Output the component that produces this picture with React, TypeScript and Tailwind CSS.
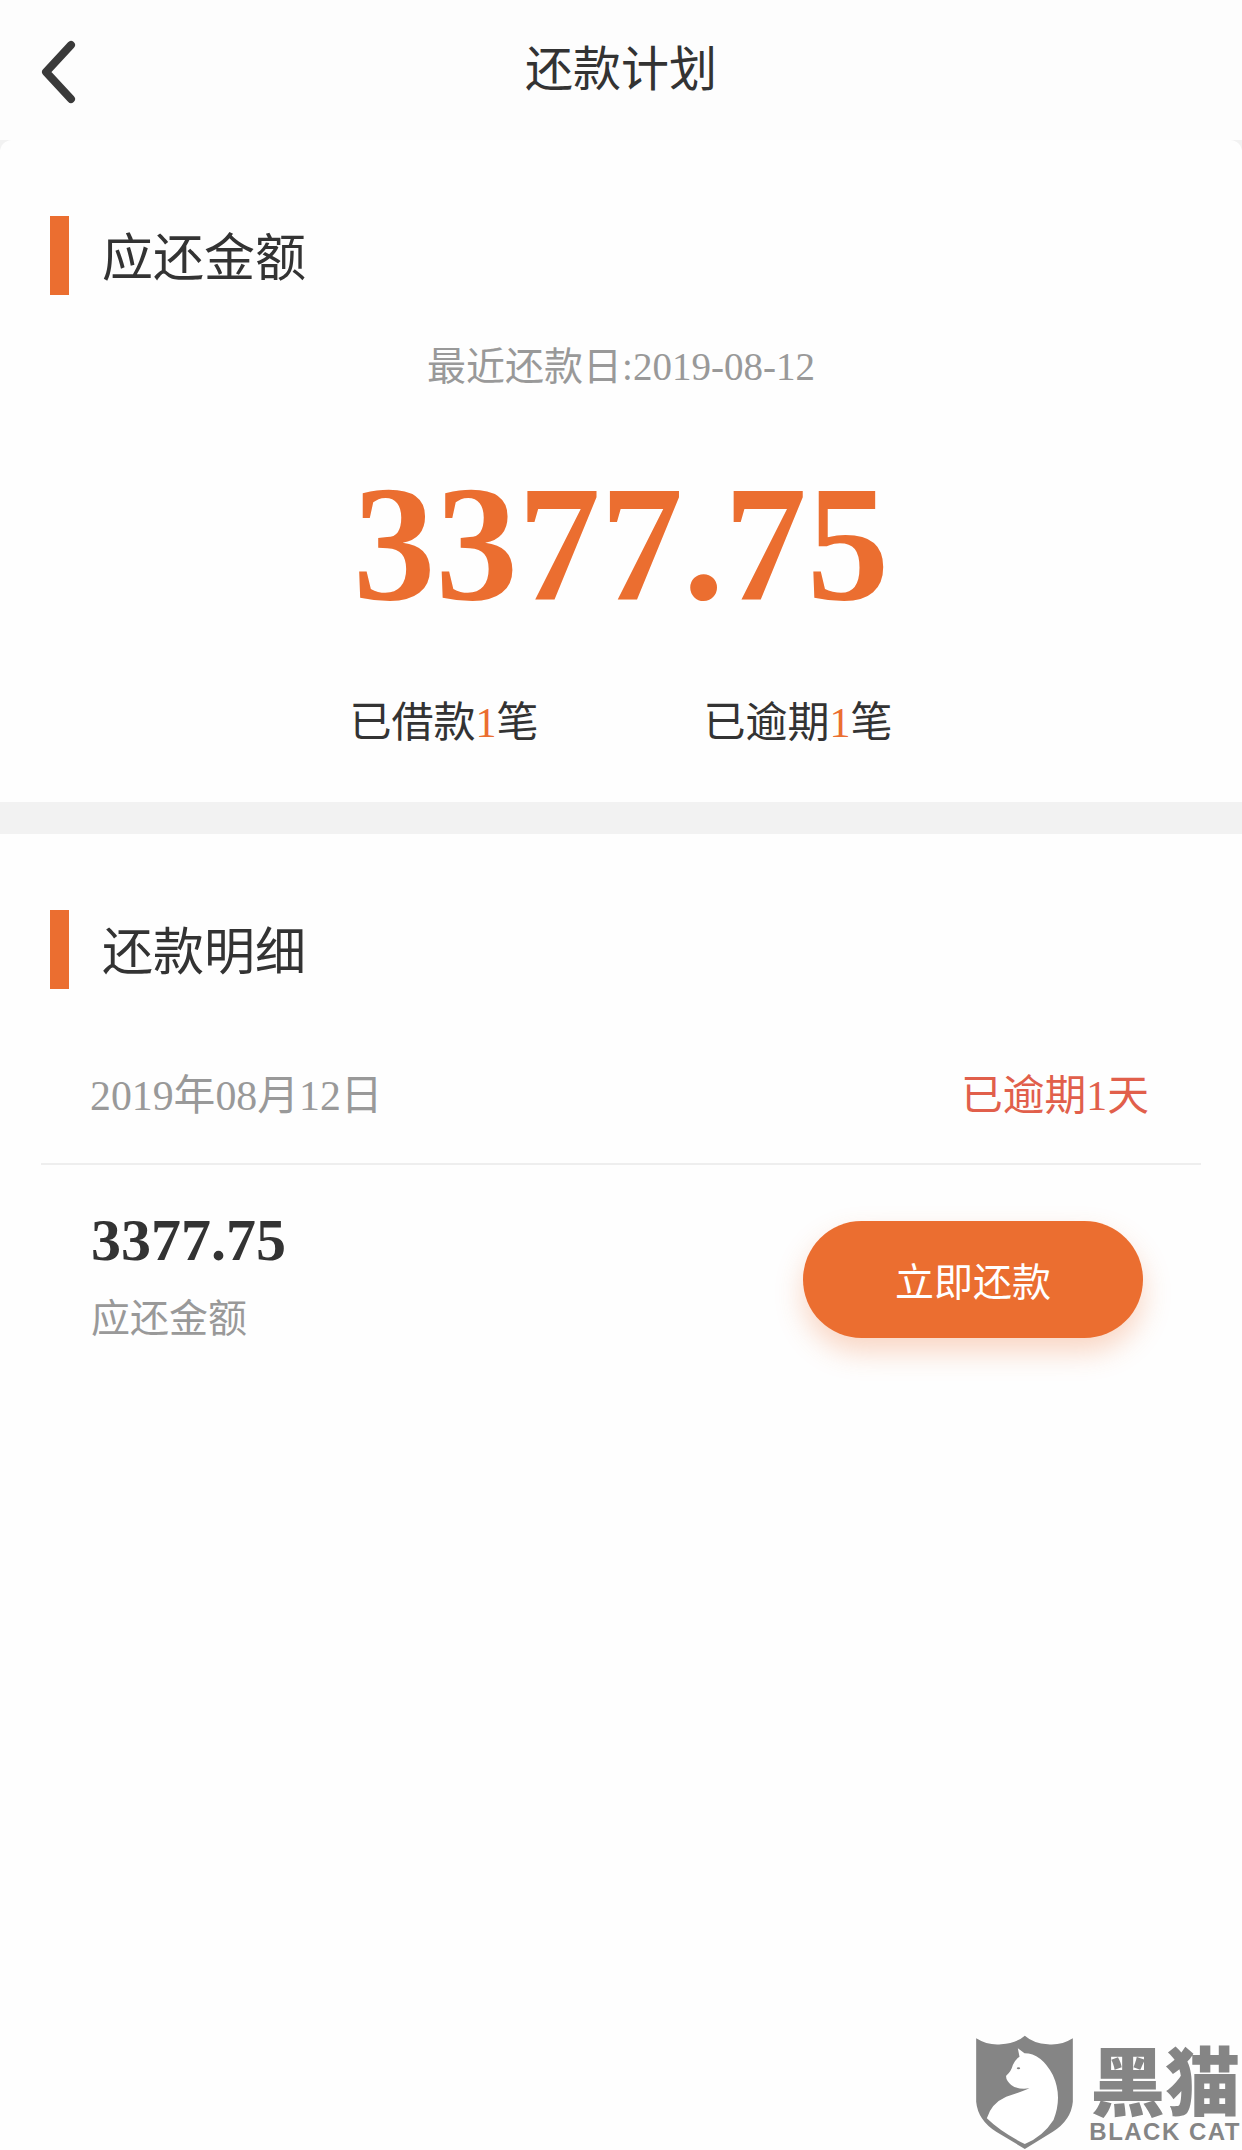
import React from "react";

const serifStack = "font-['Liberation_Serif','Noto_Sans_CJK_SC',serif]";

const SectionTitle = ({ title }: { title: string }) => (
  <div className="flex items-center ml-[50px] h-[79px]">
    <div className="w-[19px] h-[79px] bg-[#eb6e30]" />
    <h2 className="ml-[33px] mb-[3px] text-[51px] leading-none font-normal text-[#333] font-['Noto_Sans_CJK_SC',sans-serif]">
      {title}
    </h2>
  </div>
);

const BlackCatLogo = () => (
  <div className="absolute right-[1px] bottom-[1px] flex items-start gap-[16px]">
    <svg viewBox="40 30 290 342" className="w-[97px] h-[114px] shrink-0">
      <path
        d="M40 40 Q75 62 115 58 Q160 55 186 32 Q212 55 255 58 Q295 62 330 40 L330 230 Q325 285 270 320 L186 372 L100 320 Q45 285 40 230 Z"
        fill="#858585"
      />
      <path
        d="M165 70 L185 85 Q235 85 270 150 Q300 215 272 285 Q240 335 186 357 Q115 322 72 280 Q85 235 130 215 Q165 205 200 190 Q165 195 145 180 Q128 165 130 152 Q145 140 150 120 Q160 100 170 95 Z"
        fill="#fff"
      />
      <ellipse cx="167" cy="130" rx="5" ry="3" fill="#858585" />
    </svg>
    <div className="flex flex-col items-center mt-[11px]">
      <span className="text-[75px] leading-[64px] font-black text-[#858585] font-['Noto_Sans_CJK_SC',sans-serif]">
        黑猫
      </span>
      <span className="mt-[11px] text-[24px] leading-[22px] font-bold tracking-[1.5px] text-[#858585] font-['Liberation_Sans',sans-serif]">
        BLACK CAT
      </span>
    </div>
  </div>
);

export default function App() {
  return (
    <div className="relative min-h-[2150px] w-full bg-[#f2f2f2] overflow-hidden font-['Noto_Sans_CJK_SC',sans-serif]">
      <header className="grid grid-cols-[1fr_auto_1fr] items-center h-[140px] bg-[#fdfdfd]">
        <button className="ml-[40px] mt-[4px] w-[36px] h-[64px]">
          <svg viewBox="0 0 36 64" className="w-[36px] h-[64px]">
            <path
              d="M31 5 L6 32 L31 59"
              fill="none"
              stroke="#3a3a3a"
              strokeWidth="8"
              strokeLinecap="round"
              strokeLinejoin="round"
            />
          </svg>
        </button>
        <h1 className="mb-[10px] text-[48px] leading-none font-normal text-[#333]">还款计划</h1>
        <div />
      </header>

      <main className="min-h-[2010px] bg-[#fefefe] rounded-t-[12px]">
        <section className="pt-[76px] pb-[55px]">
          <SectionTitle title="应还金额" />
          <p className={`mt-[50px] h-[44px] text-center text-[39px] leading-[44px] text-[#999] ${serifStack}`}>
            最近还款日:2019-08-12
          </p>
          <p className={`mt-[73px] h-[164px] text-center text-[165px] leading-[164px] font-bold text-[#eb6e30] ${serifStack}`}>
            3377.75
          </p>
          <div className={`mt-[73px] flex justify-center gap-[165px] text-[42px] leading-[48px] text-[#333] ${serifStack}`}>
            <span>
              已借款<span className="text-[#eb6e30]">1</span>笔
            </span>
            <span>
              已逾期<span className="text-[#eb6e30]">1</span>笔
            </span>
          </div>
        </section>

        <div className="h-[32px] bg-[#f2f2f2]" />

        <section className="pt-[76px]">
          <SectionTitle title="还款明细" />
          <div
            className={`mt-[40px] mx-[41px] h-[136px] pl-[49px] pr-[52px] flex items-center justify-between border-b-2 border-[#eeeeee] text-[41.8px] leading-[48px] ${serifStack}`}
          >
            <span className="text-[#999]">2019年08月12日</span>
            <span className="text-[#e15f4b]">已逾期1天</span>
          </div>
          <div className="flex items-start justify-between pl-[91px] pr-[99px] pt-[45px]">
            <div>
              <p className={`h-[60px] text-[60px] leading-[60px] font-bold text-[#333] ${serifStack}`}>3377.75</p>
              <p className="mt-[23px] h-[44px] text-[39px] leading-[44px] text-[#999]">应还金额</p>
            </div>
            <button className="mt-[11px] w-[340px] h-[117px] rounded-full bg-[#eb6e30] text-white text-[39px] leading-none shadow-[0_14px_28px_rgba(237,110,47,0.28)]">
              立即还款
            </button>
          </div>
        </section>
      </main>

      <BlackCatLogo />
    </div>
  );
}
